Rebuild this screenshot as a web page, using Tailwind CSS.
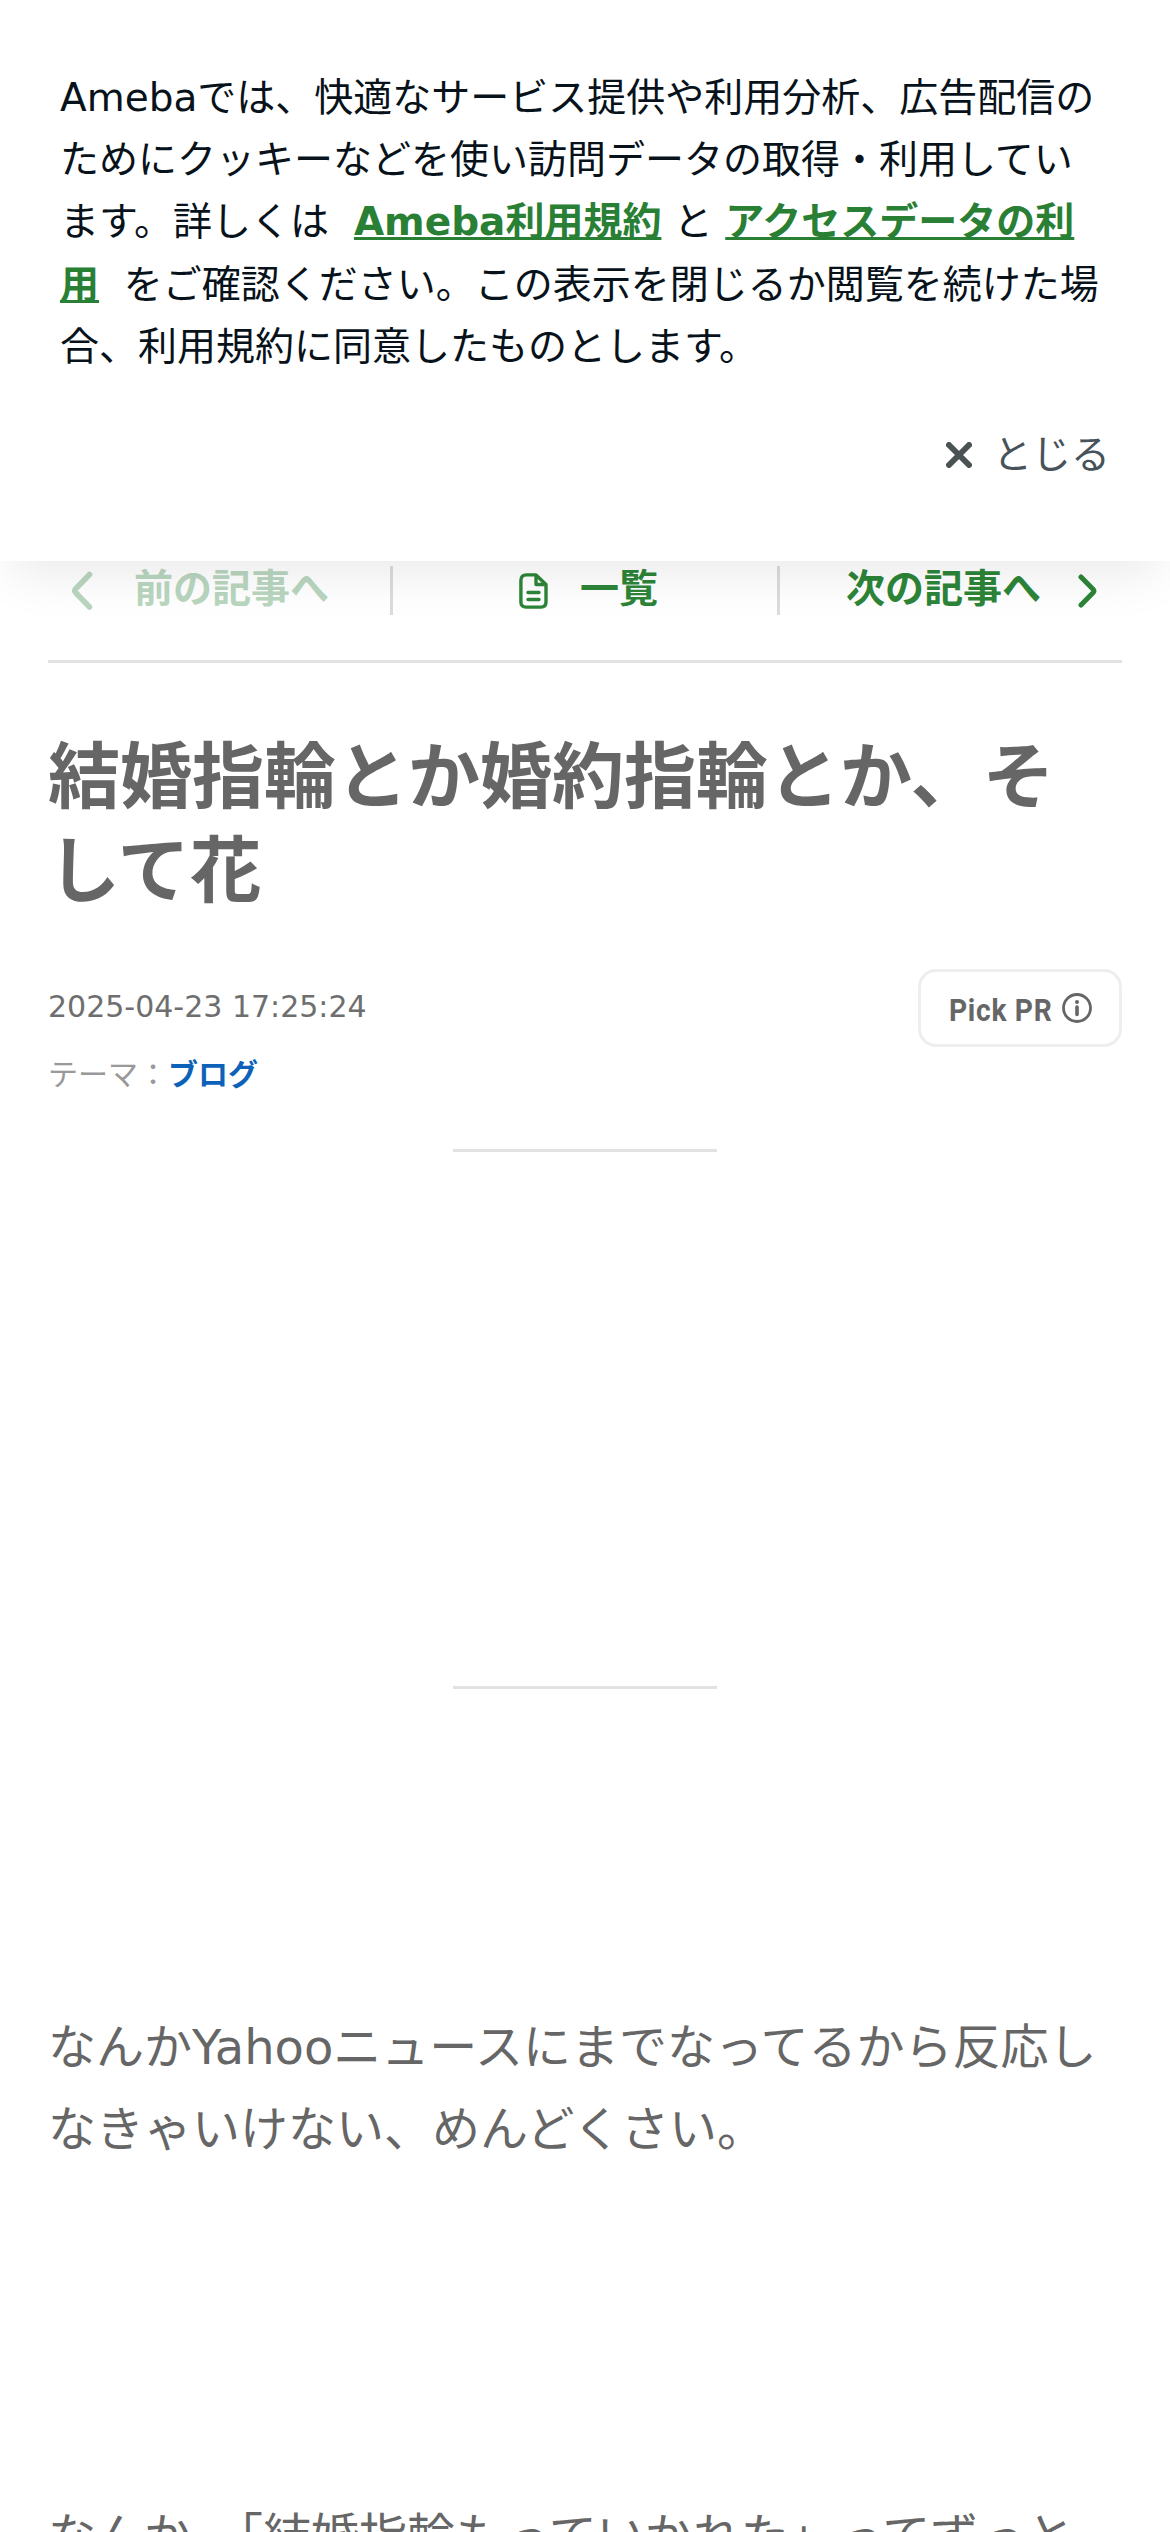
<!DOCTYPE html>
<html lang="ja">
<head>
<meta charset="utf-8">
<title>結婚指輪とか婚約指輪とか、そして花</title>
<script src="https://cdn.jsdelivr.net/npm/@tailwindcss/browser@4"></script>
</head>
<body class="bg-white h-[2532px] overflow-hidden font-['DejaVu_Sans','Noto_Sans_CJK_JP',sans-serif] text-[#666]">
<section class="relative z-10 h-[561px] bg-white px-[60px] pt-[67px] shadow-[0_24px_48px_-12px_rgba(0,0,0,0.09)]">
  <p class="text-[39px] leading-[62.2px] text-[#08121a] whitespace-nowrap">Amebaでは、快適なサービス提供や利用分析、広告配信の<br>ためにクッキーなどを使い訪問データの取得・利用してい<br>ます。詳しくは&nbsp; <a class="font-bold text-[#298035] underline decoration-[3px]">Ameba利用規約</a> と <a class="font-bold text-[#298035] underline decoration-[3px]">アクセスデータの利<br>用</a>&nbsp; をご確認ください。この表示を閉じるか閲覧を続けた場<br>合、利用規約に同意したものとします。</p>
  <div class="mt-[46px] flex items-center justify-end gap-[21px] text-[39px] leading-[62px] text-[#47525a]">
    <svg class="h-[26px] w-[26px]" viewBox="0 0 26 26" fill="none" stroke="#4b5254" stroke-width="6" stroke-linecap="round"><path d="M3 3l20 20M23 3L3 23"/></svg>
    <span>とじる</span>
  </div>
</section>
<main class="px-[48px]">
  <nav class="flex h-[102px] border-b-[3px] border-[#e2e2e2] pt-[5px] text-[39px] font-bold leading-[46px] text-[#2d8538]">
    <a class="flex h-[49px] w-[345px] items-center border-r-[3px] border-[#dcdcdc] pl-[23px]">
      <svg class="h-[39px] w-[22px]" viewBox="0 0 22 39" fill="none" stroke="#b9d6bf" stroke-width="5.5" stroke-linecap="round" stroke-linejoin="round"><path d="M18.5 3.5L4.5 18Q3 19.800 4.500 21.500L18.500 36"/></svg>
      <span class="ml-[41px] pb-[3px] text-[#b9d6bf]">前の記事へ</span>
    </a>
    <a class="flex h-[49px] w-[387px] items-center border-r-[3px] border-[#dcdcdc] pl-[126px]">
      <svg class="h-[36px] w-[29px]" viewBox="0 0 29 36" fill="none" stroke="currentColor" stroke-width="3.4" stroke-linecap="round" stroke-linejoin="round"><path d="M7.500 1.900H17L27 11.500V29Q27 34.100 22 34.100H7Q1.900 34.100 1.900 29V7.500Q1.900 1.900 7.500 1.900ZM17 2V11.500H27M9 19.500H20M9 26.500H20"/></svg>
      <span class="ml-[32px] pb-[3px]">一覧</span>
    </a>
    <a class="flex h-[49px] flex-1 items-center pl-[66px]">
      <span class="pb-[3px]">次の記事へ</span>
      <svg class="ml-[37px] h-[34px] w-[19px]" viewBox="0 0 19 34" fill="none" stroke="currentColor" stroke-width="5" stroke-linecap="round" stroke-linejoin="round"><path d="M3 3L15.300 15.500Q16.500 17 15.300 18.500L3 31"/></svg>
    </a>
  </nav>
  <h1 class="mt-[68px] text-[72px] font-bold leading-[93.6px] whitespace-nowrap">結婚指輪とか婚約指輪とか、そ<br>して花</h1>
  <div class="mt-[51px] flex items-start justify-between">
    <div class="text-[30px]">
      <p class="pt-[14px] leading-[48px] text-[#6e6e6e]">2025-04-23 17:25:24</p>
      <p class="mt-[20px] leading-[48px] text-[#999]">テーマ：<a class="font-bold text-[#0b62b8]">ブログ</a></p>
    </div>
    <button class="flex h-[78px] w-[204px] items-center rounded-[18px] border-[3px] border-[#eee] pl-[28px] font-['Roboto'] text-[32px] font-bold text-[#666]">
      <span class="w-[103px] origin-left scale-x-[0.88] whitespace-nowrap pt-[3px] text-left tracking-[0.8px]">Pick PR</span>
      <svg class="ml-[10px] h-[30px] w-[30px]" viewBox="0 0 30 30" fill="none" stroke="currentColor" stroke-linecap="round"><circle cx="15" cy="15" r="13.500" stroke-width="2.800"/><path d="M15 14v7.500" stroke-width="3.600"/><circle cx="15" cy="9" r="2" fill="currentColor" stroke="none"/></svg>
    </button>
  </div>
  <hr class="mx-auto mt-[50px] h-[3px] w-[264px] border-0 bg-[#e2e2e2]">
  <hr class="mx-auto mt-[534px] h-[3px] w-[264px] border-0 bg-[#e2e2e2]">
  <div class="mt-[318px] text-[48px] leading-[81.6px] whitespace-nowrap">
    <p>なんかYahooニュースにまでなってるから反応し<br>なきゃいけない、めんどくさい。</p>
    <p class="mt-[326px]">なんか、「結婚指輪もっていかれた」ってずっと</p>
  </div>
</main>
</body>
</html>
